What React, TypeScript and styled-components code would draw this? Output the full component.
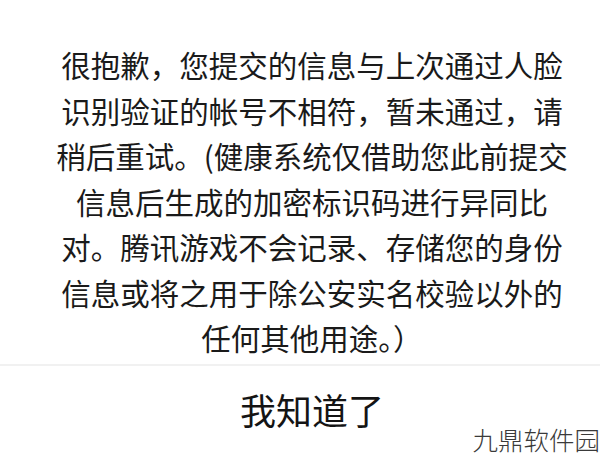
import React from "react";
import styled, { createGlobalStyle } from "styled-components";

const GlobalStyle = createGlobalStyle`
  html, body {
    margin: 0;
    padding: 0;
    background: #ffffff;
  }
  body {
    font-family: "Noto Sans CJK SC", "Noto Sans", sans-serif;
    -webkit-font-smoothing: antialiased;
  }
`;

const Dialog = styled.div`
  position: relative;
  width: 600px;
  height: 459px;
  overflow: hidden;
  background: #ffffff;
  display: flex;
  flex-direction: column;
`;

const Message = styled.div`
  padding: 42px 0 0 24px;
  display: flex;
  flex-direction: column;
  align-items: center;
`;

const Line = styled.div`
  font-size: 29.5px;
  line-height: 45.5px;
  height: 45.5px;
  color: #1a1a1a;
  white-space: nowrap;
  text-align: center;
`;

const Divider = styled.div`
  margin-top: 3px;
  height: 2px;
  background: #f1f1f1;
`;

const ConfirmButton = styled.button`
  border: none;
  background: transparent;
  padding: 0 0 0 24px;
  margin-top: 20px;
  height: 46px;
  font-family: "Noto Sans CJK SC", "Noto Sans", sans-serif;
  font-size: 36px;
  line-height: 46px;
  color: #141414;
  cursor: pointer;
`;

const Watermark = styled.div`
  position: absolute;
  right: 0;
  bottom: 5px;
  font-family: "Noto Sans CJK SC", sans-serif;
  font-weight: 300;
  font-size: 25.5px;
  line-height: 30px;
  color: #3a3a3a;
`;

const lines = [
  "很抱歉，您提交的信息与上次通过人脸",
  "识别验证的帐号不相符，暂未通过，请",
  "稍后重试。(健康系统仅借助您此前提交",
  "信息后生成的加密标识码进行异同比",
  "对。腾讯游戏不会记录、存储您的身份",
  "信息或将之用于除公安实名校验以外的",
  "任何其他用途。）",
];

const App = () => {
  return (
    <>
      <GlobalStyle />
      <Dialog>
        <Message>
          {lines.map((text) => (
            <Line key={text}>{text}</Line>
          ))}
        </Message>
        <Divider />
        <ConfirmButton>我知道了</ConfirmButton>
        <Watermark>九鼎软件园</Watermark>
      </Dialog>
    </>
  );
};

export default App;
